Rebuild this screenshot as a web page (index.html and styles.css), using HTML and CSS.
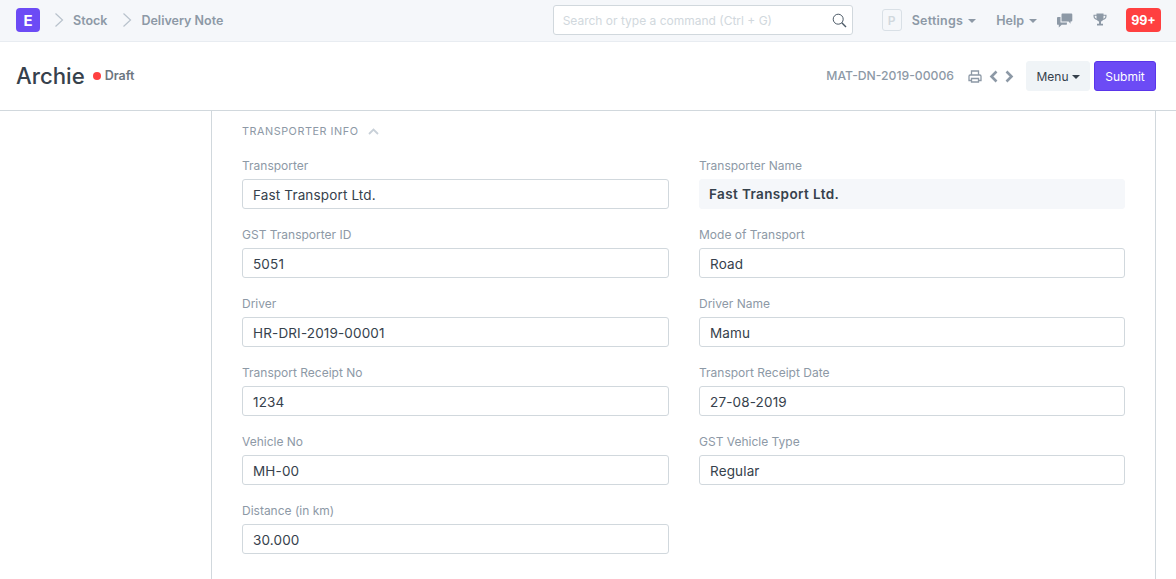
FILE: index.html
```html
<!DOCTYPE html>
<html lang="en">
<head>
<meta charset="utf-8">
<title>Archie</title>
<link rel="stylesheet" href="styles.css">
</head>
<body>
<header class="navbar">
  <div class="logo">E</div>
  <svg class="crumb-chev" width="10" height="16" viewBox="0 0 10 16"><path d="M1.5 1.5 8.5 8l-7 6.500" fill="none" stroke="#b8c2cc" stroke-width="1.200"/></svg>
  <a class="crumb crumb-stock">Stock</a>
  <svg class="crumb-chev" width="10" height="16" viewBox="0 0 10 16"><path d="M1.5 1.500 8.500 8l-7 6.500" fill="none" stroke="#b8c2cc" stroke-width="1.200"/></svg>
  <a class="crumb">Delivery Note</a>
  <div class="search">
    <span class="search-text">Search or type a command (Ctrl + G)</span>
    <svg width="15" height="15" viewBox="0 0 15 15"><circle cx="6.200" cy="6.200" r="5" fill="none" stroke="#4c5a67" stroke-width="1"/><path d="m9.800 9.800 4.200 4.200" stroke="#4c5a67" stroke-width="1.400"/></svg>
  </div>
  <div class="avatar">P</div>
  <a class="nav-link nav-settings">Settings<i class="caret"></i></a>
  <a class="nav-link nav-help">Help<i class="caret"></i></a>
  <svg class="nav-chat" width="16" height="15" viewBox="0 0 16 15"><path fill="#8d99a6" d="M4.500 1.500c0-.5.400-.9.900-.9h9c.5 0 .9.400.9.900v6c0 .5-.4.900-.9.900h-.9v2.400L11.600 8.400H4.500z"/><path fill="#8d99a6" d="M3.500 4H.9C.4 4 0 4.400 0 4.900v6c0 .5.400.9.900.900h.9V14.500l2.900-2.700h4.300c.5 0 .9-.4.900-.9v-1.500H3.500z"/></svg>
  <svg class="nav-trophy" width="14" height="14" viewBox="0 0 14 14"><path fill="#8d99a6" d="M3.500.5h7v1.200H13.500v1.800c0 1.900-1.500 3.200-3.500 3.500-.5.700-1.100 1.200-2 1.400v2.300h2V12.500H4v-1.800h2V8.400c-.9-.2-1.500-.7-2-1.400C2 6.700.5 5.400.5 3.500V1.700h3zM1.700 2.800v.7c0 1 .7 1.800 1.900 2.200-.1-.8-.1-1.900-.1-2.900zm10.600 0H10.500c0 1 0 2.100-.1 2.900 1.200-.4 1.900-1.200 1.900-2.200z"/></svg>
  <div class="badge">99+</div>
</header>

<section class="page-head">
  <h1 class="title">Archie</h1>
  <span class="dot"></span>
  <span class="status">Draft</span>
  <span class="doc-id">MAT-DN-2019-00006</span>
  <svg class="print" width="14" height="13" viewBox="0 0 14 13"><path fill="none" stroke="#8d99a6" stroke-width="1.300" d="M3.500 5V1h7v4M3.500 10.500H1V6.300C1 5.600 1.500 5 2.200 5h9.600c.7 0 1.200.6 1.200 1.300v4.200h-2.500M3.500 8.500h7V12h-7z"/></svg>
  <svg class="pager pager-prev" width="9" height="13" viewBox="0 0 9 13"><path d="M7.500 1.500 2.500 6.500l5 5" fill="none" stroke="#8d99a6" stroke-width="2.600"/></svg>
  <svg class="pager pager-next" width="9" height="13" viewBox="0 0 9 13"><path d="M1.500 1.500 6.500 6.500l-5 5" fill="none" stroke="#8d99a6" stroke-width="2.600"/></svg>
  <button class="btn btn-menu">Menu<i class="caret caret-dark"></i></button>
  <button class="btn btn-submit">Submit</button>
</section>

<main class="page-body">
  <div class="sheet">
    <div class="section-head">
      <span>TRANSPORTER INFO</span>
      <svg width="11" height="7" viewBox="0 0 11 7"><path d="m1 6 4.500-4.500L10 6" fill="none" stroke="#c8d0d8" stroke-width="1.800"/></svg>
    </div>
    <div class="fields">
      <div class="field"><label class="label">Transporter</label><div class="input">Fast Transport Ltd.</div></div>
      <div class="field"><label class="label">Transporter Name</label><div class="input readonly">Fast Transport Ltd.</div></div>
      <div class="field"><label class="label">GST Transporter ID</label><div class="input">5051</div></div>
      <div class="field"><label class="label">Mode of Transport</label><div class="input">Road</div></div>
      <div class="field"><label class="label">Driver</label><div class="input">HR-DRI-2019-00001</div></div>
      <div class="field"><label class="label">Driver Name</label><div class="input">Mamu</div></div>
      <div class="field"><label class="label">Transport Receipt No</label><div class="input">1234</div></div>
      <div class="field"><label class="label">Transport Receipt Date</label><div class="input">27-08-2019</div></div>
      <div class="field"><label class="label">Vehicle No</label><div class="input">MH-00</div></div>
      <div class="field"><label class="label">GST Vehicle Type</label><div class="input">Regular</div></div>
      <div class="field"><label class="label">Distance (in km)</label><div class="input">30.000</div></div>
    </div>
  </div>
</main>
</body>
</html>
```
FILE: styles.css
```css
* { box-sizing: border-box; }
html, body { margin: 0; height: 100%; overflow: hidden; }
body { font-family: Inter, "Noto Sans", sans-serif; background: #fff; color: #36414c; }

.navbar {
  height: 42px;
  background: #f5f7fa;
  border-bottom: 1px solid #e8ecf1;
  display: flex;
  align-items: center;
  padding: 0 15px 1px 16px;
}
.logo {
  width: 24px; height: 24px;
  border-radius: 4px;
  background: #6c4bf5;
  color: #fff;
  font-weight: 700;
  font-size: 15px;
  display: flex; align-items: center; justify-content: center;
  margin-right: 14px;
}
.crumb-chev { margin-right: 9px; }
.crumb { font-size: 12.500px; font-weight: 600; color: #8d99a6; }
.crumb-stock { margin-right: 15px; }
.search {
  margin-left: auto;
  width: 300px; height: 30px;
  background: #fff;
  border: 1px solid #d1d8dd;
  border-radius: 3px;
  display: flex; align-items: center; justify-content: space-between;
  padding: 0 5px 0 9px;
}
.search-text { font-size: 12px; color: #d1d8dd; }
.avatar {
  margin-left: 29px;
  width: 20px; height: 22px;
  border: 1px solid #d9e0e6;
  border-radius: 3px;
  color: #d1d8dd;
  font-size: 12px; font-weight: 600;
  display: flex; align-items: center; justify-content: center;
}
.nav-link { font-size: 12.500px; font-weight: 600; color: #8d99a6; display: flex; align-items: center; }
.nav-settings { margin-left: 10px; letter-spacing: 0.25px; }
.nav-help { margin-left: 20px; }
.caret {
  display: inline-block;
  margin-left: 5px; margin-top: 1px;
  border-left: 4px solid transparent;
  border-right: 4px solid transparent;
  border-top: 4px solid #8d99a6;
}
.nav-chat { margin-left: 20px; }
.nav-trophy { margin-left: 20px; }
.badge {
  margin-left: 19px;
  width: 35px; height: 24px;
  background: #ff4040;
  border-radius: 4px;
  color: #fff;
  font-size: 12.500px; font-weight: 700;
  display: flex; align-items: center; justify-content: center;
}

.page-head {
  height: 69px;
  border-bottom: 1px solid #d1d8dd;
  display: flex;
  align-items: center;
  padding: 0 20px 0 16px;
}
.title { margin: 0; font-size: 22.200px; line-height: 30px; font-weight: 500; color: #36414c; }
.dot { width: 8px; height: 8px; border-radius: 50%; background: #ff4040; margin-left: 8px; margin-bottom: 1px; }
.status { margin-left: 4px; margin-bottom: 2px; font-size: 12.500px; font-weight: 600; color: #6c7680; }
.doc-id { margin-left: auto; margin-bottom: 2px; font-size: 12.200px; font-weight: 500; color: #8d99a6; }
.print { margin-left: 14px; }
.pager-prev { margin-left: 7px; }
.pager-next { margin-left: 7px; }
.btn {
  font-family: inherit;
  font-size: 12px;
  height: 30px;
  border-radius: 3px;
  display: flex; align-items: center; justify-content: center;
  padding: 0;
}
.btn-menu {
  margin-left: 12px;
  width: 64px;
  background: #f0f4f7;
  border: 1px solid #f0f4f7;
  color: #36414c;
}
.caret-dark { border-top-color: #36414c; margin-left: 3px; }
.btn-submit {
  margin-left: 4px;
  width: 62px;
  background: #6c4bf5;
  border: 1px solid #5a35ea;
  color: #fff;
}

.page-body { padding-left: 211px; padding-right: 20px; height: 469px; }
.sheet {
  height: 100%;
  border-left: 1px solid #d1d8dd;
  border-right: 1px solid #d1d8dd;
  padding: 0 30px;
}
.section-head {
  height: 41px;
  display: flex; align-items: center; gap: 10px;
  font-size: 10.800px;
  letter-spacing: 0.55px;
  color: #8d99a6;
}
.fields {
  display: grid;
  grid-template-columns: 427px 426px;
  column-gap: 30px;
  row-gap: 17px;
  margin-top: 5px;
}
.label {
  display: block;
  height: 22px;
  font-size: 12px;
  line-height: 18px;
  color: #8d99a6;
}
.input {
  height: 30px;
  border: 1px solid #d1d8dd;
  border-radius: 3px;
  padding: 1px 10px 0;
  font-size: 13.500px;
  color: #36414c;
  display: flex; align-items: center;
  letter-spacing: 0.15px;
}
.readonly {
  background: #f5f7fa;
  border-color: #f5f7fa;
  font-weight: 600;
  letter-spacing: 0.38px;
  padding: 0 9px;
}
```
